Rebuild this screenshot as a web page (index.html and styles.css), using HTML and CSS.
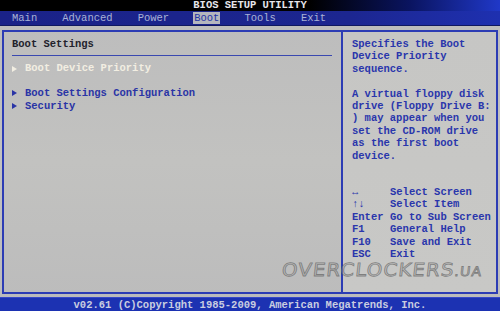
FILE: index.html
```
<!DOCTYPE html>
<html>

<head>
    <meta name="viewport" content="width=device-width, initial-scale=1">
    <link rel="stylesheet" href="styles.css">
</head>

<body>

    <div class="titlebar">BIOS SETUP UTILITY</div>

    <div class="menubar">
        <span class="tab">Main</span>
        <span class="tab">Advanced</span>
        <span class="tab">Power</span>
        <span class="tab active">Boot</span>
        <span class="tab">Tools</span>
        <span class="tab">Exit</span>
    </div>

    <div class="screen">
        <div class="frame">
            <div class="left-panel">
                <div class="section-title">Boot Settings</div>
                <div class="rule"></div>
                <ul class="items">
                    <li class="item selected"><span class="arrow"></span>Boot Device Priority</li>
                    <li class="item spacer"></li>
                    <li class="item"><span class="arrow"></span>Boot Settings Configuration</li>
                    <li class="item"><span class="arrow"></span>Security</li>
                </ul>
            </div>

            <div class="right-panel">
                <div class="help">
                    <div>Specifies the Boot</div>
                    <div>Device Priority</div>
                    <div>sequence.</div>
                    <div>&nbsp;</div>
                    <div>A virtual floppy disk</div>
                    <div>drive (Floppy Drive B:</div>
                    <div>) may appear when you</div>
                    <div>set the CD-ROM drive</div>
                    <div>as the first boot</div>
                    <div>device.</div>
                </div>

                <div class="keys">
                    <span class="key">&harr;</span><span>Select Screen</span>
                    <span class="key">&uarr;&darr;</span><span>Select Item</span>
                    <span class="key">Enter</span><span>Go to Sub Screen</span>
                    <span class="key">F1</span><span>General Help</span>
                    <span class="key">F10</span><span>Save and Exit</span>
                    <span class="key">ESC</span><span>Exit</span>
                </div>
            </div>
        </div>

        <div class="watermark">OVERCLOCKERS<span class="tld">.UA</span></div>
    </div>

    <div class="footer">v02.61 (C)Copyright 1985-2009, American Megatrends, Inc.</div>

</body>

</html>
```

FILE: styles.css
```
html,
body {
    margin: 0;
    padding: 0;
    width: 500px;
    height: 311px;
    overflow: hidden;
    background-color: #000;
    font-family: "Liberation Mono", "DejaVu Sans Mono", monospace;
    font-size: 10.5px;
    font-weight: bold;
}

.titlebar {
    height: 11px;
    line-height: 11px;
    text-align: center;
    color: #e6e6ea;
    background: linear-gradient(90deg, #000 0%, #000 62%, #0a1460 82%, #2038c8 100%);
}

.menubar {
    height: 14px;
    display: flex;
    align-items: center;
    gap: 23px;
    padding-left: 11px;
    background: linear-gradient(90deg, #1a2288 0%, #1c2690 70%, #1e30b0 100%);
    border-bottom: 1px solid #101860;
}

.tab {
    padding: 0 1px;
    line-height: 12px;
    color: #a9b2d6;
    font-weight: normal;
}

.tab.active {
    background-color: #b4b6be;
    color: #2434a4;
}

.screen {
    position: relative;
    height: 271px;
    padding: 4px 2px 2px 2px;
    box-sizing: border-box;
    background: linear-gradient(180deg, #bdbdbd 0%, #c2c2c0 50%, #bcbcbc 100%);
}

.frame {
    height: 264px;
    display: grid;
    grid-template-columns: 339px 1fr;
    border: 2px solid #2c3cb4;
    box-sizing: border-box;
}

.left-panel {
    border-right: 2px solid #2c3cb4;
    padding: 6px 9px 0 8px;
    line-height: 12.4px;
}

.section-title {
    color: #22222c;
}

.rule {
    height: 1px;
    margin: 5px 0 0 0;
    width: 320px;
    background-color: #3a48b0;
}

.items {
    list-style: none;
    margin: 0;
    padding: 0;
    margin-top: 6px;
}

.item {
    height: 12.4px;
    color: #2a34a6;
    display: flex;
    align-items: center;
}

.item.selected {
    color: #f2eee2;
}

.arrow {
    width: 0;
    height: 0;
    border-top: 3px solid transparent;
    border-bottom: 3px solid transparent;
    border-left: 5px solid currentColor;
    margin-right: 8px;
}

.right-panel {
    padding: 6px 4px 0 9px;
    line-height: 12.4px;
    color: #2a36ac;
    background: linear-gradient(180deg, #c6c6c4 0%, #c8c8c6 100%);
}

.keys {
    display: grid;
    grid-template-columns: 38px 1fr;
    margin-top: 24px;
    white-space: nowrap;
}

.watermark {
    position: absolute;
    left: 282px;
    top: 233px;
    font-family: "DejaVu Sans", sans-serif;
    font-weight: normal;
    font-size: 18px;
    letter-spacing: 1px;
    color: rgba(170, 170, 170, 0.35);
    -webkit-text-stroke: 0.8px rgba(105, 105, 105, 0.75);
    transform: scaleX(1.1) skewX(-6deg);
    transform-origin: left;
}

.watermark .tld {
    font-size: 13px;
}

.footer {
    height: 15px;
    line-height: 15px;
    text-align: center;
    color: #c9cde0;
    background-color: #1c32b2;
    border-top: 1px solid #3848c8;
}
```
